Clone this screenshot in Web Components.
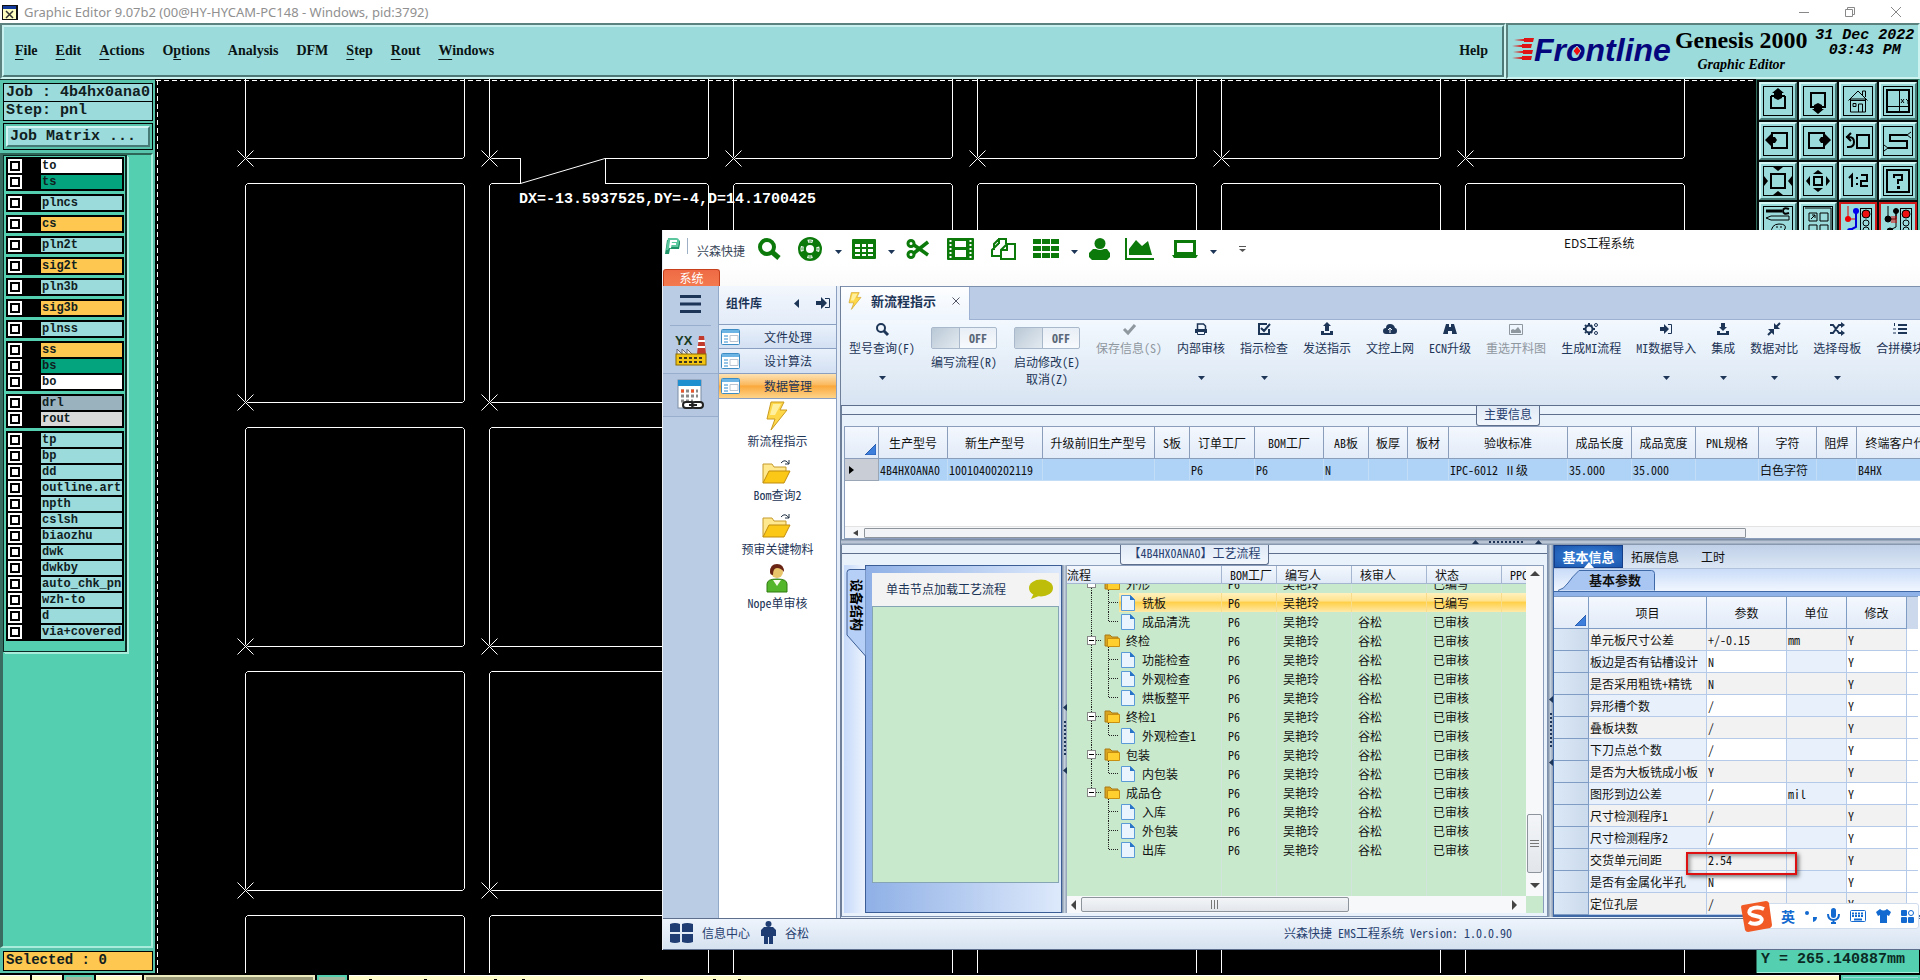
<!DOCTYPE html>
<html lang="zh-CN">
<head>
<meta charset="utf-8">
<title>Graphic Editor</title>
<style>
  html, body {
    margin: 0;
    height: 100%;
    overflow: hidden;
    background: #000;
  }
</style>
</head>
<body>
<genesis-desktop></genesis-desktop>

<script>
const svg = (w, h, body, attrs = '') =>
  `<svg width="${w}" height="${h}" viewBox="0 0 ${w} ${h}" fill="none" aria-hidden="true" ${attrs}>${body}</svg>`;

const baseStyles = `
  * { box-sizing: border-box; }
  svg { display: block; flex: none; }
  button {
    margin: 0; padding: 0; border: 0; background: none;
    font: inherit; color: inherit; text-align: inherit;
  }
  table { border-spacing: 0; table-layout: fixed; }
  td, th { padding: 0; font-weight: inherit; white-space: nowrap; overflow: hidden; }
`;

class BaseElement extends HTMLElement {
  constructor() {
    super();
    this.attachShadow({ mode: 'open' });
  }

  connectedCallback() {
    this.shadowRoot.innerHTML = `<style>${baseStyles}${this.styles()}</style>${this.render()}`;
  }

  styles() { return ':host { display: block; }'; }
  render() { return '<slot></slot>'; }
}

/* ---------- Genesis: title bar ---------- */

customElements.define('genesis-titlebar', class extends BaseElement {
  styles() {
    return `
      :host {
        display: flex; align-items: center; height: 23px; padding: 0 18px 0 2px;
        background: #fff; color: #909090; font: 13px/22px "Noto Sans", sans-serif;
      }
      span { flex: 1; margin-left: 6px; }
      .buttons { display: flex; gap: 34px; }
    `;
  }
  render() {
    return `
      ${svg(16, 16, '<rect x="0" y="1" width="16" height="15" fill="#111"/><rect x="1" y="2" width="13" height="3" fill="#123a9c"/><rect x="1" y="5" width="13" height="10" fill="#ffffc0"/><path d="M4 7l7 7M11 7l-7 7" stroke="#333" stroke-width="1.5"/>')}
      <span>Graphic Editor 9.07b2 (00@HY-HYCAM-PC148 - Windows, pid:3792)</span>
      <div class="buttons">
        <button aria-label="Minimize">${svg(12, 12, '<path d="M1 6.500h10" stroke="#888"/>')}</button>
        <button aria-label="Restore">${svg(12, 12, '<path d="M1.500 3.500h7v7h-7zM3.500 3v-1.500h7v7H9" stroke="#888"/>')}</button>
        <button aria-label="Close">${svg(12, 12, '<path d="M1 1l10 10M11 1L1 11" stroke="#888"/>')}</button>
      </div>
    `;
  }
});

/* ---------- Genesis: menu bar and brand ---------- */

customElements.define('genesis-menubar', class extends BaseElement {
  styles() {
    return `
      :host { display: flex; height: 56px; background: #d2f3f1; }
      nav, .brand {
        border: 2px solid; border-color: #5c8280 #cdf3f1 #cdf3f1 #5c8280;
        background: #9bdbdb; display: flex;
      }
      nav { flex: 1; align-items: center; }
      .inner {
        flex: 1; align-self: stretch; display: flex; align-items: center; gap: 18px; padding: 0 14px 0 11px;
        border: 2px solid; border-color: #c8f1ef #4c7877 #4c7877 #c8f1ef;
        font: bold 14px/18px "Liberation Serif", serif; color: #0a1414;
      }
      u { text-underline-offset: 4px; }
      .help { margin-left: auto; }
      .brand { width: 414px; padding: 0 2px 0 4px; align-items: flex-start; }
      .logo { display: flex; margin-top: 12px; height: 26px; }
      .logo b { font: italic bold 32px/26px "Liberation Sans", sans-serif; color: #05057e; }
      .o { display: inline-block; position: relative; }
      .o svg { position: absolute; left: 6px; top: 9px; }
      .name { margin-left: 4px; text-align: center; color: #000; }
      .name strong { display: block; font: bold 24px/30px "Liberation Serif", serif; }
      .name em { display: block; font: italic bold 14px/20px "Liberation Serif", serif; }
      time { flex: 1; text-align: center; white-space: nowrap; font: italic bold 15px/15px "Liberation Mono", monospace; color: #000; margin: 3px 0 0 6px; }
      time span { display: block; }
    `;
  }
  render() {
    const items = ['<u>F</u>ile', '<u>E</u>dit', '<u>A</u>ctions', 'O<u>p</u>tions', 'Analysis', 'DFM', '<u>S</u>tep', '<u>R</u>out', '<u>W</u>indows'];
    const dart = (x, y) => `<path d="M${x} ${y}l10-1v-1h10l-1 4h-9v-1z" fill="#e01414"/>`;
    return `
      <nav><div class="inner">
        ${items.map(i => `<button>${i}</button>`).join('')}
        <button class="help">Help</button>
      </div></nav>
      <div class="brand">
        <div class="logo">
          ${svg(22, 26, dart(2, 3) + dart(0, 9) + dart(1, 15) + dart(0, 21))}
          <b>Fr<span class="o">o${svg(10, 10, '<path d="M5 0l4 5-4 5-4-5z" fill="#f01010" stroke="#9bdbdb"/>')}</span>ntline</b>
        </div>
        <div class="name"><strong>Genesis 2000</strong><em>Graphic Editor</em></div>
        <time><span>31 Dec 2022</span><span>03:43 PM</span></time>
      </div>
    `;
  }
});

/* ---------- Genesis: layer list ---------- */

const LAYER_GROUPS = [
  [['to', 'white'], ['ts', 'green']],
  [['plncs']], [['cs', 'amber']], [['pln2t']], [['sig2t', 'amber']],
  [['pln3b']], [['sig3b', 'amber']], [['plnss']],
  [['ss', 'amber'], ['bs', 'green'], ['bo', 'white']],
  [['drl', 'slate'], ['rout', 'grey']],
  [['tp'], ['bp'], ['dd'], ['outline.art'], ['npth'], ['cslsh'], ['biaozhu'], ['dwk'],
   ['dwkby'], ['auto_chk_pnl'], ['wzh-to'], ['d'], ['via+covered']]
];

customElements.define('layer-panel', class extends BaseElement {
  styles() {
    return `
      :host {
        display: flex; flex-direction: column; width: 155px; padding: 3px 2px 2px 3px;
        background: #57c4ab; border-top: 1px solid #1c3b36;
        font: bold 15px/17px "Liberation Mono", monospace; color: #10201e;
      }
      .field { height: 19px; border: 1px solid #000; background: #9bdbdb; padding-left: 2px; white-space: nowrap; }
      .field + .field { border-top: 0; }
      .matrix { margin-top: 2px; border: 1px solid #000; padding: 2px; }
      .matrix button {
        width: 100%; height: 21px; padding-left: 2px; background: #9bdbdb;
        border: 2px solid; border-color: #d0f5f3 #467a77 #467a77 #d0f5f3;
      }
      .well {
        flex: 1; margin: 3px 0 3px -3px; background: #54cfb0;
        border: solid; border-width: 2px 2px 2px 3px; border-color: #2d6556 #a8ecdc #a8ecdc #3a6d62;
      }
      .frame {
        width: 124px; padding: 1px 1px 7px 2px; border: 1px solid #0d2a24; border-right-width: 2px;
        box-shadow: 1px 1px #a8ecdc, 2px 2px #a8ecdc;
        font-size: 12px; line-height: 14px;
      }
      .group { background: #000; margin-bottom: 3px; padding: 2px; }
      label { display: flex; height: 14px; }
      label + label { margin-top: 2px; }
      input {
        appearance: none; flex: none; width: 14px; height: 14px; margin: 0 19px 0 0;
        border: 2px solid #fff; background: #fff; box-shadow: inset 0 0 0 2px #000;
      }
      span { flex: 1; background: #9bdbdb; padding-left: 1px; overflow: hidden; }
      .white { background: #fff; }
      .green { background: #04a57e; }
      .amber { background: #fdc750; }
      .slate { background: #9ab2be; }
      .grey { background: #d9d9d9; }
      .selected { height: 20px; border: 1px solid #000; background: #fdc750; padding-left: 2px; font-size: 14px; }
    `;
  }
  render() {
    const row = ([name, tone = '']) => `<label><input type="checkbox"><span class="${tone}">${name}</span></label>`;
    return `
      <div class="field">Job : 4b4hx0ana0</div>
      <div class="field">Step: pnl</div>
      <div class="matrix"><button>Job Matrix ...</button></div>
      <div class="well"><div class="frame">
        ${LAYER_GROUPS.map(g => `<div class="group">${g.map(row).join('')}</div>`).join('')}
      </div></div>
      <div class="selected">Selected : 0</div>
    `;
  }
});

/* ---------- Genesis: board canvas ---------- */

customElements.define('board-canvas', class extends BaseElement {
  styles() {
    return `
      :host { display: block; flex: 1; min-width: 0; background: #000; overflow: hidden; }
      text { font: bold 15px "Liberation Mono", monospace; fill: #fff; }
    `;
  }
  render() {
    const pitch = 244;
    const size = 219;
    let cells = '';
    for (let col = 0; col < 6; col++) {
      for (let row = 0; row < 5; row++) {
        const x = 90.5 + col * pitch;
        const y = -139.5 + row * pitch;
        cells += `<path d="M${x + 2} ${y}h${size - 4}l2 2v${size - 4}l-2 2h${4 - size}l-2-2v${4 - size}z"/>`;
        cells += `<path d="M${x - 8} ${y + size - 8}l16 16m0-16l-16 16"/>`;
      }
    }
    return `
      <svg width="100%" height="100%" fill="none" stroke="#fff">
        <path d="M2.500 1v2000M1 1.500h3000" stroke-dasharray="5 3"/>
        ${cells}
        <path d="M366 79.500h84M366 104.500h84" stroke="#000" stroke-width="3"/>
        <path d="M365.500 79v25.500L450 79.500M450.500 79v26"/>
        <text x="364" y="124" stroke="none">DX=-13.5937525,DY=-4,D=14.1700425</text>
      </svg>
    `;
  }
});

/* ---------- Genesis: right tool palette ---------- */

const PALETTE = {
  'Pan up': '<path d="M8 10H8v12h14V10" stroke-width="2"/><path d="M8 10h14" stroke-width="2"/><path d="M15 2l6 5h-2v5l-4 2-4-2V7H9z" fill="#000" stroke="none"/>',
  'Pan down': '<path d="M8 7h14v14H8z" stroke-width="2"/><path d="M15 28l6-5h-2v-4l-4-2-4 2v4H9z" fill="#000" stroke="none"/>',
  'Home': '<path d="M5.500 14.500L15 5l9.500 9.500M7.500 13v13h15V13zM7.500 14.500h15M15.500 26v-8h4v8M10 17.500h3v3h-3zM19.500 9V5h3v6"/>',
  'Coordinates': '<path d="M4 4h22v22H4z" stroke-width="2"/><path d="M16.500 4v22M4 20.500h22M18 13l3 4m0-4l-3 4m5-4l2 2 2-2m-2 2v3"/>',
  'Pan left': '<path d="M9 7h15v15H9z" stroke-width="2"/><path d="M2 14l6-6v3h4l2 3-2 3H8v3z" fill="#000" stroke="none"/>',
  'Pan right': '<path d="M6 7h15v15H6z" stroke-width="2"/><path d="M28 14l-6-6v3h-4l-2 3 2 3h4v3z" fill="#000" stroke="none"/>',
  'Previous view': '<path d="M14 9h12v13H14z" stroke-width="2"/><path d="M4 21h2q5 0 5-5t-5-5H3m5-4l-4 4 4 4" stroke-width="2"/>',
  'Serpent': '<path d="M24 9H7v6h17v7H5" stroke-width="2"/><path d="M24 9l4-3m-4 3l4 3M5 22l-4-3m4 3l-4 3"/>',
  'Zoom in': '<path d="M8 8h14v14H8z" stroke-width="2"/><path d="M10 1h10l-5 4zM10 29h10l-5-4zM1 10v10l4-5zM29 10v10l-4-5z" fill="#000" stroke="none"/>',
  'Zoom out': '<path d="M11 11h8v8h-8z" stroke-width="2"/><path d="M10 8h10l-5-4zM10 22h10l-5 4zM7 10v10l-4-5zM23 10v10l4-5z" fill="#000" stroke="none"/>',
  'Zoom 1:2': '<path d="M6 12l3-3v12M18 9h6v6h-6v5h7" stroke-width="2"/><path d="M13 11h2v2h-2zM13 17h2v2h-2z" fill="#000" stroke="none"/>',
  'Query': '<path d="M4 4h22v22H4z" stroke-width="2"/><path d="M11 12v-3h8v5h-4v4" stroke-width="2"/><path d="M14 20h3v3h-3z" fill="#000" stroke="none"/>',
  'Setup': '<path d="M3 5h16" stroke-width="3"/><path d="M26 3q-6-2-6 2t6 2" stroke-width="2"/><path d="M3 12l5-2h18v4H8zM8 28q0-10 8-10t6 5q-3 4-6 1" /><path d="M13 21h2m2 0h2"/>',
  'Panels': '<path d="M2 2h26v30H2M6 7h8v8H6zM17 7h8v8h-8zM6 19h8v8H6zM17 19h8v8h-8z"/><path d="M8 13l4-4h-3m3 0v3"/>',
  'Net colour': '<path d="M5 0v13h8" stroke="#d00"/><path d="M13 5v16l-8 4" stroke="#00d" stroke-width="2"/><circle cx="5" cy="13" r="3" fill="#e00" stroke="none"/><circle cx="13" cy="5" r="3" fill="#00e" stroke="none"/><circle cx="7" cy="25" r="3" fill="#00e" stroke="none"/><rect x="17.500" y="2.500" width="11" height="28"/><circle cx="23" cy="8" r="4" fill="#f01010"/><circle cx="23" cy="17" r="3"/><circle cx="23" cy="24" r="3"/>',
  'Net check': '<path d="M5 0v13h8v-8v16l-8 4"/><path d="M9 10v7m2-7v7m2-7v7" stroke="#d00"/><circle cx="5" cy="13" r="3" fill="#000"/><circle cx="13" cy="5" r="2.500" fill="#000"/><circle cx="7" cy="25" r="3" fill="#000"/><rect x="17.500" y="2.500" width="11" height="28"/><circle cx="23" cy="8" r="4" fill="#f01010"/><circle cx="23" cy="17" r="3"/><circle cx="23" cy="24" r="3"/>'
};

customElements.define('tool-palette', class extends BaseElement {
  styles() {
    return `
      :host {
        display: flex; flex-direction: column; justify-content: space-between; width: 164px;
        border-left: 1px solid #2f6b5a; background: #000;
      }
      .grid {
        display: grid; grid-template-columns: repeat(4, 38px); gap: 2px; padding: 2px 1px 2px 2px;
        background: #050d0c; border-right: 2px solid #57c4ab; border-top: 1px solid #2f6b5a;
      }
      button {
        height: 38px; padding: 2px; background: #9bdbdb;
        border: 2px solid; border-color: #d3f7f5 #467a77 #467a77 #d3f7f5;
      }
      button.hot { border-color: #d01818; }
      button svg { stroke: #000; outline: 1px solid #000; outline-offset: -1px; overflow: hidden; }
      button.hot svg { outline: 0; }
      output {
        margin-right: 1px; height: 23px; padding-left: 4px; background: #54cfb0;
        border-bottom: 1px solid #a8ecdc;
        font: bold 15px/20px "Liberation Mono", monospace; color: #0b2a24; white-space: nowrap;
      }
    `;
  }
  render() {
    return `
      <div class="grid">
        ${Object.entries(PALETTE).map(([name, body]) =>
          `<button class="${name.startsWith('Net') ? 'hot' : ''}" aria-label="${name}">${svg(30, 30, body)}</button>`).join('')}
      </div>
      <output>Y = 265.140887mm</output>
    `;
  }
});

/* ---------- Genesis: command line strip ---------- */

customElements.define('command-strip', class extends BaseElement {
  styles() {
    return `
      :host { display: flex; height: 7px; padding-top: 2px; gap: 2px; background: #000; overflow: hidden; }
      i { background: #fffdc9; width: 30px; border-top: 1px solid #fff; }
      i.teal { background: #9fb9a0; border: solid #54cfb0; border-width: 2px 2px 0; }
      i.mid { width: 46px; }
      i.bar { width: 171px; border: 2px solid #ecebc0; border-bottom: 0; background: #9a9a78; }
      i.fill { flex: 1; }
      i.end { width: 79px; background: #9bdbdb; border: 2px solid #54cfb0; }
    `;
  }
  render() {
    const marks = [20, 75, 145, 173, 291, 364, 389];
    return `
      <i></i><i></i><i class="teal"></i><i class="mid"></i><i class="bar"></i><i class="teal"></i>
      <i class="fill">${svg(400, 4, marks.map(x => `<path d="M${x} 3.500h3" stroke="#000"/>`).join(''))}</i>
      <i class="end"></i>
    `;
  }
});

/* ---------- EDS: icons ---------- */

const INK = '#1d3557';
const GREEN = '#0b7a0b';

const caret = (color = INK) => svg(7, 4, `<path d="M0 0h7L3.500 4z" fill="${color}"/>`);
const left = svg(5, 9, `<path d="M5 0v9L0 4.500z" fill="${INK}"/>`);

const GREEN_ICONS = {
  search: svg(24, 22, `<circle cx="10" cy="9" r="7" stroke="${GREEN}" stroke-width="4"/><path d="M15 14l7 6" stroke="${GREEN}" stroke-width="5"/>`),
  ring: svg(26, 24, `<circle cx="13" cy="12" r="8" stroke="${GREEN}" stroke-width="8"/><circle cx="13" cy="12" r="8" stroke="#fff" stroke-width="3" stroke-dasharray="5 7.570" stroke-dashoffset="2.500"/><circle cx="13" cy="12" r="8" stroke="${GREEN}" stroke-width="1" stroke-dasharray="3 9.570" stroke-dashoffset="1.500"/>`),
  table: svg(24, 20, `<rect width="24" height="20" rx="1" fill="${GREEN}"/><path d="M3 5h5v3H3zM10 5h4v3h-4zM16 5h5v3h-5zM3 10h5v3H3zM10 10h4v3h-4zM16 10h5v3h-5zM3 15h5v2H3zM10 15h4v2h-4zM16 15h5v2h-5z" fill="#fff"/>`),
  cut: svg(23, 20, `<circle cx="5" cy="4.500" r="3" stroke="${GREEN}" stroke-width="3"/><circle cx="5" cy="15.500" r="3" stroke="${GREEN}" stroke-width="3"/><path d="M8 6l14 10M8 14L22 3" stroke="${GREEN}" stroke-width="3.500"/>`),
  film: svg(27, 22, `<rect width="27" height="22" rx="1" fill="${GREEN}"/><path d="M8 3h11v6H8zM8 12h11v7H8z" fill="#fff"/><path d="M3.500 2v19M23.500 2v19" stroke="#fff" stroke-width="2" stroke-dasharray="2 2"/>`),
  copy: svg(26, 22, `<path d="M8 6h-1L1 12v6h9M8 6V1h7v5M8 1L3 6v6M14 8l-4 4v9h14V6h-8zM16 6v6h-6" stroke="${GREEN}" stroke-width="2"/>`),
  grid: svg(27, 20, `<path d="M0 0h8v5H0zM9 0h8v5H9zM18 0h8v5h-8zM0 7h8v5H0zM9 7h8v5H9zM18 7h8v5h-8zM0 14h8v5H0zM9 14h8v5H9zM18 14h8v5h-8z" fill="${GREEN}"/>`),
  user: svg(22, 22, `<circle cx="11" cy="5.500" r="5.500" fill="${GREEN}"/><path d="M4 11h3q4 2 8 0h3l3 4v4l-3 3H3l-3-3v-4z" fill="${GREEN}"/>`),
  chart: svg(30, 22, `<path d="M1 0v21h28" stroke="${GREEN}" stroke-width="2"/><path d="M4 17v-6l7-9 6 6 6-5 4 14z" fill="${GREEN}"/>`),
  laptop: svg(26, 18, `<rect x="3.500" y="1.500" width="19" height="12" stroke="${GREEN}" stroke-width="3"/><path d="M0 15h26l-2 3H2z" fill="${GREEN}"/>`)
};

const bolt = (w, h) =>
  `<svg width="${w}" height="${h}" viewBox="0 0 22 30" aria-hidden="true"><path d="M5 1h13l-4 8h7L5 29l4-11H1z" fill="#ffd84a" stroke="#c99a1e"/><path d="M7 3h8L9 14H4z" fill="#fff0a0"/></svg>`;

const folderOpen = svg(30, 26, '<path d="M1 24V5h9l2 3h12v4" fill="#ffe88e" stroke="#c59a2a"/><path d="M1 24l6-12h21l-6 12z" fill="#fbc817" stroke="#c08d10"/><path d="M19 4q4-5 8 1m0-4v4h-4" stroke="#234"/>');

const person = svg(22, 29, '<circle cx="11" cy="8" r="6" fill="#e8c46a"/><path d="M4 8Q4 0 11 0t7 8q-3-4-7-4t-4 7q-3 0-3-3z" fill="#6a2413"/><path d="M1 28v-8q0-5 10-5t10 5v8z" fill="#54b62a" stroke="#2e7a10"/><path d="M7 16l4 6 4-6z" fill="#f4fbe8"/>');

const RIBBON_ICONS = {
  search: '<circle cx="7" cy="7" r="4" stroke-width="2"/><path d="M10 10l4 4" stroke-width="3"/>',
  check: '<path d="M3 8l4 4 7-8" stroke-width="3"/>',
  print: '<path d="M4.500 8V3h6l2 2v3" stroke-width="1.500"/><path d="M2 8h12v4H2z" fill="currentColor" stroke="none"/><path d="M4.500 10.500h7v3h-7z" fill="#f0f6fd"/>',
  tick: '<path d="M13 8v5H3V3h8M5 7l3 3 6-7" stroke-width="2"/>',
  upload: '<path d="M8 1l4 4h-2v5H6V5H4zM2 10h3v2h6v-2h3v4H2z" fill="currentColor" stroke="none"/>',
  cloud: '<path d="M4 13q-3 0-3-3t3-3q0-4 4-4t5 4q2 0 2 3t-3 3z" fill="currentColor" stroke="none"/><path d="M8 12V7m-2 2l2-2 2 2" stroke="#f0f6fd"/>',
  road: '<path d="M4 3h3v3h2V3h3l3 10h-5v-3H6v3H1z" fill="currentColor" stroke="none"/>',
  image: '<path d="M1.500 3.500h13v10h-13z"/><path d="M3 12V9l2-1 2 1 3-3 3 4v2z" fill="currentColor" stroke="none"/>',
  gears: '<circle cx="6" cy="8" r="3.500" stroke-width="2"/><path d="M6 2v2m0 8v2M0 8h2m8 0h2M2 4l1 1m6-1L8 5M2 12l1-1m6 1l-1-1" stroke-width="2"/><circle cx="13" cy="4" r="1.500"/><circle cx="13" cy="12" r="1.500"/>',
  enter: '<path d="M2 6h4V3l5 5-5 5v-3H2z" fill="currentColor" stroke="none"/><path d="M10 3.500h3.500v9H10"/>',
  download: '<path d="M6 2h4v4h2L8 10 4 6h2zM2 10h3v2h6v-2h3v4H2z" fill="currentColor" stroke="none"/>',
  shrink: '<path d="M8 8h6L8 2zM8 8H2l6 6z" fill="currentColor" stroke="none"/><path d="M14 2l-4 4M6 10l-4 4" stroke-width="2"/>',
  shuffle: '<path d="M1 4h3l6 8h4M1 12h3l6-8h4" stroke-width="2"/><path d="M12 1l4 3-4 3zM12 9l4 3-4 3z" fill="currentColor" stroke="none"/>',
  list: '<path d="M6 4h9M6 8h9M6 12h9" stroke-width="2"/><path d="M2.500 2v3M1 8h3M1 12h3"/>'
};

const edsFont = '12px/16px "Noto Sans Mono CJK SC", "Noto Sans CJK SC", sans-serif';

/* ---------- EDS: header ---------- */

customElements.define('eds-header', class extends BaseElement {
  styles() {
    return `
      :host {
        display: flex; flex-direction: column; justify-content: space-between; height: 56px;
        background: linear-gradient(#fff 60%, #fafafa); color: #222;
      }
      .row { display: flex; align-items: center; height: 38px; padding-left: 1px; }
      .brand { margin: 4px 12px 0 8px; padding-left: 1px; color: #3a4759; }
      .sep { width: 1px; height: 16px; margin: 0 0 6px 7px; background: #9db0c6; }
      .logo { margin-bottom: 6px; }
      .quick { display: flex; align-items: center; height: 24px; }
      .title { margin: -12px auto 0 318px; color: #111; font-family: "Noto Sans CJK SC", sans-serif; }
      .menu {
        width: 57px; height: 17px; border: 1px solid #c6401c; border-bottom: 0; border-radius: 3px 3px 0 0;
        background: linear-gradient(#ee6a45, #f47a4e); color: #fff; text-align: center;
      }
    `;
  }
  render() {
    const gaps = { search: 16, ring: 12, table: 12, cut: 18, film: 17, copy: 16, grid: 11, user: 14, chart: 17, laptop: 12 };
    const carets = { ring: 10, table: 11, grid: 11, laptop: 22 };
    const quick = Object.entries(GREEN_ICONS).map(([name, icon]) =>
      `<button style="margin-right:${gaps[name]}px" aria-label="${name}">${icon}</button>` +
      (carets[name] ? `<button style="margin:6px ${carets[name]}px 0 0" aria-label="${name} menu">${caret()}</button>` : '')).join('');
    return `
      <div class="row">
        ${svg(16, 20, '<path d="M3 4h11q3 0 2 4l-1 5H6l-1 5H1z" fill="#1f9468"/><path d="M4 2h8q4 0 3 5l-1 4H6l-2 3H2z" fill="#5cc79f"/><path d="M6 12l1-7h6M7 8h5" stroke="#fff" stroke-width="2"/>', 'class="logo"')}
        <span class="sep"></span>
        <span class="brand">兴森快捷</span>
        <div class="quick">${quick}
          <button aria-label="more">${svg(7, 6, '<path d="M0 .5h7" stroke="#555"/><path d="M0 3h7L3.500 6z" fill="#555"/>')}</button>
        </div>
        <span class="title">EDS工程系统</span>
      </div>
      <button class="menu">系统</button>
    `;
  }
});

/* ---------- EDS: icon rail ---------- */

customElements.define('eds-rail', class extends BaseElement {
  styles() {
    return `
      :host { display: flex; flex-direction: column; width: 56px; background: #bacbe4; border-right: 1px solid #93a9c8; }
      button { display: flex; justify-content: center; align-items: center; height: 43px; background: #b4c6e0; border-bottom: 1px solid #99aecd; }
      button:first-of-type { height: 40px; margin: 0 7px; background: none; padding-bottom: 4px; }
      button:nth-of-type(2) { height: 48px; background: none; border-color: #99aecd; }
      text { font: bold 13px "Liberation Sans", sans-serif; fill: #173a1c; }
    `;
  }
  render() {
    return `
      <button aria-label="menu">${svg(21, 18, `<path d="M0 1.500h21M0 9h21M0 16.500h21" stroke="${INK}" stroke-width="3"/>`)}</button>
      <button aria-label="YX">${svg(32, 32, '<text x="0" y="11">YX</text><path d="M22 20l2-18h5l2 18z" fill="#c23a2c"/><path d="M23 7h7M22 13h8" stroke="#fff" stroke-width="2"/><path d="M2 20v-5l5 5v-5l5 5v-5l5 5" stroke="#667" fill="#eee"/><rect x="1" y="20" width="30" height="11" fill="#f2c414" stroke="#8a6b00"/><path d="M4 24h25M4 28h25" stroke="#3d3520" stroke-width="2" stroke-dasharray="3 2"/>')}</button>
      <button aria-label="calendar">${svg(28, 32, '<rect x="1" y="1" width="23" height="28" fill="#fff" stroke="#7d8ea3"/><rect x="1" y="1" width="23" height="6" fill="#1f8fd0"/><path d="M4 12h17M4 17h17M4 22h12" stroke="#888" stroke-width="3" stroke-dasharray="3 2"/><path d="M4 12h3M14 12h3" stroke="#e8542c" stroke-width="3"/><rect x="6" y="23" width="11" height="6" rx="3" fill="#fff" stroke="#222" stroke-width="2"/><rect x="15" y="23" width="11" height="6" rx="3" fill="#fff" stroke="#222" stroke-width="2"/><path d="M12 26h8" stroke="#222" stroke-width="2"/>')}</button>
    `;
  }
});

/* ---------- EDS: component library ---------- */

customElements.define('component-library', class extends BaseElement {
  styles() {
    return `
      :host { display: flex; width: 122px; border-right: 1px solid #6d7f99; background: #e4ecf8; }
      .body { flex: 1; display: flex; flex-direction: column; margin-right: 3px; background: #fff; border-right: 1px solid #8ba0c0; color: ${INK}; }
      header { display: flex; align-items: center; height: 38px; padding: 0 5px 4px 7px; background: linear-gradient(#f3f7fd, #e3ecf9); font-weight: bold; }
      header span { flex: 1; }
      header svg:last-child { margin-left: 17px; }
      .group {
        display: flex; align-items: center; height: 25px; padding-left: 2px;
        border-bottom: 1px solid #8ba0c0; background: linear-gradient(#e9f1fb, #d3e0f3);
      }
      header + .group { border-top: 1px solid #8ba0c0; }
      .group span { flex: 1; text-align: center; }
      .group.on { background: linear-gradient(#fde2b4, #fbb95e 45%, #fba83b 50%, #fdd489); }
      .items { display: flex; flex-direction: column; align-items: center; padding-top: 2px; gap: 6px; }
      .item { display: flex; flex-direction: column; align-items: center; justify-content: flex-end; gap: 2px; height: 48px; }
    `;
  }
  render() {
    const form = svg(19, 16, '<rect x=".5" y=".5" width="18" height="15" rx="1" fill="#fff" stroke="#3d8cc4"/><rect x="1" y="1" width="17" height="3" fill="#6cb4e4"/><path d="M3 7h4M3 10h4M3 13h4" stroke="#2f8ad0"/><path d="M9 6.500h8v6H9z" stroke="#b9c4d0"/>');
    const groups = ['文件处理', '设计算法', '数据管理'];
    const items = [[bolt(22, 30), '新流程指示'], [folderOpen, 'Bom查询2'], [folderOpen, '预审关键物料'], [person, 'Nope单审核']];
    return `
      <div class="body">
        <header><span>组件库</span>${left}${svg(15, 12, `<path d="M0 4h5V0l6 6-6 6V8H0z" fill="${INK}"/><path d="M9 1.500h4.500v9H9" stroke="${INK}"/>`)}</header>
        ${groups.map((g, i) => `<button class="group ${i === 2 ? 'on' : ''}">${form}<span>${g}</span></button>`).join('')}
        <div class="items">
          ${items.map(([icon, name]) => `<button class="item">${icon}<span>${name}</span></button>`).join('')}
        </div>
      </div>
    `;
  }
});

/* ---------- EDS: document tabs and ribbon ---------- */

customElements.define('doc-tabs', class extends BaseElement {
  styles() {
    return `
      :host { display: flex; height: 34px; background: #bbcce6; border-top: 1px solid #7d90ad; border-bottom: 1px solid #9db2d2; }
      .tab {
        display: flex; align-items: center; width: 129px; height: 33px; padding: 0 9px 5px 7px; color: ${INK};
        background: linear-gradient(#fdfeff, #eef5fd); border-right: 1px solid #9db2d2;
      }
      strong { flex: 1; margin-left: 9px; font-size: 13px; }
    `;
  }
  render() {
    return `<div class="tab">${bolt(14, 18)}<strong>新流程指示</strong>
      <button aria-label="close tab">${svg(8, 8, '<path d="M.5 .5l7 7m0-7l-7 7" stroke="#556"/>')}</button></div>`;
  }
});

const RIBBON = [
  { icon: 'search', text: '型号查询(F)', menu: true },
  { toggle: true, text: '编写流程(R)' },
  { toggle: true, text: '启动修改(E)<br>取消(Z)' },
  { icon: 'check', text: '保存信息(S)', off: true },
  { icon: 'print', text: '内部审核', menu: true },
  { icon: 'tick', text: '指示检查', menu: true },
  { icon: 'upload', text: '发送指示' },
  { icon: 'cloud', text: '文控上网' },
  { icon: 'road', text: 'ECN升级' },
  { icon: 'image', text: '重选开料图', off: true },
  { icon: 'gears', text: '生成MI流程' },
  { icon: 'enter', text: 'MI数据导入', menu: true },
  { icon: 'download', text: '集成', menu: true },
  { icon: 'shrink', text: '数据对比', menu: true },
  { icon: 'shuffle', text: '选择母板', menu: true },
  { icon: 'list', text: '合拼模块' }
];

customElements.define('ribbon-bar', class extends BaseElement {
  styles() {
    return `
      :host {
        display: flex; gap: 15px; height: 86px; padding: 1px 0 0 8px; overflow: hidden; color: ${INK};
        background: linear-gradient(#f2f8fe, #d8e4f2); border-bottom: 1px solid #5d6f8c;
      }
      button, label { flex: none; display: flex; flex-direction: column; align-items: center; white-space: nowrap; text-align: center; }
      button svg { stroke: currentColor; }
      button span { margin-top: 3px; }
      button .drop { margin-top: 20px; stroke: none; }
      button[disabled] { color: #8f979f; }
      label { min-width: 68px; padding-top: 6px; line-height: 17px; }
      .switch {
        display: flex; width: 66px; height: 22px; margin-bottom: 4px; border: 1px solid #a9b8ca; border-radius: 2px;
        background: linear-gradient(#e8eef6, #f7fafd); font-weight: bold; color: #5b6878; line-height: 19px;
      }
      .switch b { flex: 1; }
      input { appearance: none; width: 28px; margin: 0; border: solid #a9b8ca; border-width: 0 1px 0 0; background: linear-gradient(135deg, #b9c8d6, #e3eaf0); }
    `;
  }
  render() {
    return RIBBON.map(({ icon, text, menu, toggle, off }) => toggle
      ? `<label><span class="switch"><input type="checkbox" role="switch"><b>OFF</b></span><span>${text}</span></label>`
      : `<button ${off ? 'disabled' : ''}>${svg(16, 16, RIBBON_ICONS[icon])}<span>${text}</span>
          ${menu ? `<div class="drop">${svg(7, 4, '<path d="M0 0h7L3.500 4z" fill="currentColor" stroke="none"/>')}</div>` : ''}</button>`).join('');
  }
});

/* ---------- EDS: titled group, tab sits on the top rule ---------- */

customElements.define('group-panel', class extends BaseElement {
  styles() {
    return `
      :host { display: flex; flex-direction: column; min-width: 0; overflow: hidden; background: #e9f1fb; border-left: 1px solid #6d7f99; }
      .head { display: flex; height: 20px; padding-left: var(--legend-start, 0); justify-content: var(--legend-align, center); background: linear-gradient(#5d6f8c, #5d6f8c) 0 8px / 100% 1px no-repeat; }
      .legend {
        padding: 0 7px; line-height: 15px; color: #27406f; white-space: nowrap;
        background: linear-gradient(#dfe9f6, #f2f7fd); border: 1px solid #5d6f8c; border-top: 0; border-radius: 0 0 3px 3px;
      }
      ::slotted(*) { flex: 1; min-height: 0; }
    `;
  }
  render() {
    return `<div class="head"><div class="legend">${this.getAttribute('label')}</div></div><slot></slot>`;
  }
});

/* ---------- EDS: main info grid ---------- */

const INFO_COLUMNS = [
  ['生产型号', 69, '4B4HX0ANA0'], ['新生产型号', 95, '10010400202119'], ['升级前旧生产型号', 112, ''],
  ['S板', 35, ''], ['订单工厂', 65, 'P6'], ['BOM工厂', 69, 'P6'], ['AB板', 45, 'N'], ['板厚', 39, ''],
  ['板材', 41, ''], ['验收标准', 119, 'IPC-6012 Ⅱ级'], ['成品长度', 64, '35.000'], ['成品宽度', 64, '35.000'],
  ['PNL规格', 63, ''], ['字符', 58, '白色字符'], ['阻焊', 40, ''], ['终端客户代码', 90, 'B4HX']
];

customElements.define('info-grid', class extends BaseElement {
  styles() {
    return `
      :host { display: flex; flex-direction: column; margin-left: 2px; overflow: hidden; background: #fff; border: solid #8a9dbb; border-width: 1px 0 1px 1px; color: #111; }
      .scroll { flex: 1; overflow: hidden; }
      table { width: 1102px; }
      th { height: 32px; text-align: center; background: linear-gradient(#f4f8fe, #e2ebf8); border: solid #8a9dbb; border-width: 0 1px 1px 0; }
      td { height: 22px; padding-left: 1px; background: #afd3f7; border: solid #c3ddf7; border-width: 0 1px 1px 0; }
      th:first-child { vertical-align: bottom; }
      th:first-child svg { margin: 0 2px 3px auto; }
      td:first-child { padding-left: 4px; background: #c9ced6; border-color: #9aa5b5; }
      .bar { display: flex; align-items: center; height: 12px; padding-left: 8px; background: #f6f7f8; border-top: 1px solid #e3e3e3; }
      .thumb { width: 882px; height: 10px; margin-left: 6px; border: 1px solid #8e949c; border-radius: 1px; background: #f0f2f5; }
    `;
  }
  render() {
    return `
      <div class="scroll"><table>
        <colgroup><col style="width:34px">${INFO_COLUMNS.map(c => `<col style="width:${c[1]}px">`).join('')}</colgroup>
        <thead><tr><th>${svg(11, 11, '<path d="M11 0v11H0z" fill="#3f7fdc" stroke="#2a5cae"/>')}</th>${INFO_COLUMNS.map(c => `<th>${c[0]}</th>`).join('')}</tr></thead>
        <tbody><tr><td>${svg(5, 8, '<path d="M0 0v8l5-4z" fill="#000"/>')}</td>${INFO_COLUMNS.map(c => `<td>${c[2]}</td>`).join('')}</tr></tbody>
      </table></div>
      <div class="bar">${svg(5, 6, '<path d="M5 0v6L0 3z" fill="#444"/>')}<div class="thumb"></div></div>
    `;
  }
});

/* ---------- EDS: splitter bar ---------- */

customElements.define('split-bar', class extends BaseElement {
  styles() {
    return `
      :host { display: flex; flex: none; justify-content: center; align-items: center; gap: 10px; background: linear-gradient(90deg, #7c8da6, #c5d0dd, #8e9db3); }
      :host([row]) { height: 6px; padding-left: 253px; background: linear-gradient(#6f809b, #c5d0dd, #7c8da6); }
      :host([col]) { flex-direction: column; width: 5px; padding-top: 0; }
    `;
  }
  render() {
    if (this.hasAttribute('row')) {
      const up = svg(7, 4, `<path d="M0 4h7L3.500 0z" fill="${INK}"/>`);
      return `${up}${svg(36, 2, `<path d="M0 1h36" stroke="${INK}" stroke-width="2" stroke-dasharray="2 2"/>`)}${up}`;
    }
    const arrow = svg(4, 7, `<path d="M4 0v7L0 3.500z" fill="${INK}"/>`);
    return `${arrow}${svg(2, 36, `<path d="M1 0v36" stroke="${INK}" stroke-width="2" stroke-dasharray="2 2"/>`)}${arrow}`;
  }
});

/* ---------- EDS: device structure side panel ---------- */

customElements.define('device-panel', class extends BaseElement {
  styles() {
    return `
      :host { display: flex; width: 218px; flex: none; background: linear-gradient(90deg, #c6dafa, #eef4fd 22px); }
      .tab { position: relative; width: 21px; height: 96px; }
      .tab svg { position: absolute; }
      .tab b { position: relative; display: block; width: 21px; padding: 14px 0 0 5px; writing-mode: vertical-rl; text-orientation: sideways; line-height: 16px; font-size: 13px; }
      .box { flex: 1; display: flex; flex-direction: column; padding: 7px 2px 29px 6px; border: 1px solid #3c5e96; background: linear-gradient(90deg, #8fb0e6, #dde9fb); }
      .hint { display: flex; align-items: center; justify-content: space-between; height: 33px; padding: 0 6px 2px 14px; background: #f3f3f3; color: ${INK}; }
      .area { flex: 1; background: #c9e9cd; border: 1px solid #86a5b4; }
    `;
  }
  render() {
    return `
      <div class="tab">${svg(22, 96, '<path d="M21.500 4.500H6q-3 0-3 3V70l18.500 21" fill="#b6cff6" stroke="#3c5e96"/>')}<b>设备结构</b></div>
      <div class="box">
        <div class="hint"><span>单击节点加载工艺流程</span>${svg(24, 20, '<ellipse cx="12" cy="9" rx="12" ry="8.500" fill="#bdbd0a"/><path d="M5 14l-3 6 8-3z" fill="#bdbd0a"/>')}</div>
        <div class="area"></div>
      </div>
    `;
  }
});

/* ---------- EDS: process tree ---------- */

const PROCESS = [
  { name: '外形', group: true, state: '已编写', auditor: '', cut: true },
  { name: '铣板', state: '已编写', auditor: '', active: true },
  { name: '成品清洗', last: true },
  { name: '终检', group: true },
  { name: '功能检查' }, { name: '外观检查' }, { name: '烘板整平', last: true },
  { name: '终检1', group: true },
  { name: '外观检查1', last: true },
  { name: '包装', group: true },
  { name: '内包装', last: true },
  { name: '成品仓', group: true, end: true },
  { name: '入库', tail: true }, { name: '外包装', tail: true }, { name: '出库', last: true, tail: true }
];

customElements.define('process-tree', class extends BaseElement {
  styles() {
    return `
      :host { display: flex; flex: 1; min-width: 0; flex-direction: column; background: #c9e9cd; border-top: 1px solid #8a9dbb; border-right: 1px solid #8a9dbb; color: #111; }
      .main { flex: 1; display: flex; min-height: 0; }
      .scroll { flex: 1; min-width: 0; overflow: hidden; }
      table { width: 534px; height: 100%; }
      th { height: 18px; padding-left: 8px; text-align: left; background: linear-gradient(#f4f8fe, #dfe9f6); border: solid #a5b6d0; border-width: 0 1px 1px 0; }
      th:first-child { padding-left: 0; }
      td { height: 19px; padding-left: 6px; line-height: 18px; border-right: 1px solid #d2e2dc; }
      td:first-child { padding-left: 0; }
      td div { display: flex; align-items: center; height: 19px; }
      .cut td { height: 9px; }
      .cut div { height: 9px; overflow: hidden; align-items: flex-end; }
      .active td { background: linear-gradient(#fff1bf, #ffe38e 40%, #ffd04a 50%, #ffe9a8); border-color: #f8dc8c; }
      .active td:first-child { background-position: 52px 0; background-repeat: no-repeat; }
      .rest td { height: auto; }
      .name svg { margin-right: 7px; }
      .name.folder svg { margin-right: 5px; }
      .v { display: flex; flex-direction: column; align-items: center; justify-content: space-between; width: 17px; padding: 3px 0 6px; background: #f7f8f9; }
      .v .thumb { width: 15px; height: 59px; margin: auto 0 7px; }
      .h { display: flex; align-items: center; height: 17px; padding: 0 7px 0 2px; background: #f7f8f9; border-right: 17px solid #c9e9cd; }
      .h .thumb { width: 268px; height: 15px; margin: 0 auto 0 2px; }
      .thumb { display: flex; align-items: center; justify-content: center; border: 1px solid #8e949c; border-radius: 2px; background: linear-gradient(#f3f5f8, #e2e6eb); }
    `;
  }
  guides({ group, last, tail, end, cut }) {
    const dots = 'stroke="#222" stroke-dasharray="1 1"';
    const spine = tail ? '' : end ? `<path d="M24.500 0v6" ${dots}/>` : `<path d="M24.500 ${cut ? 14 : 0}v19" ${dots}/>`;
    if (group) {
      return svg(54, 19, `${spine}<path d="M29 9.500h6M41.500 16v3" ${dots}/>
        <rect x="20.500" y="5.500" width="8" height="8" fill="#fff" stroke="#888"/><path d="M22 9.500h5" stroke="#000"/>
        <path d="M38 15V4h5l2 2h6v9z" fill="#d9a520" stroke="#a87b16"/><path d="M40.500 7.500h12v8h-12z" fill="#ffcf30" stroke="#c98f10"/>`);
    }
    return svg(68, 19, `${spine}<path d="M41.500 0v${last ? 10 : 19}M42 9.500h9" ${dots}/>
      <path d="M54.500 2.500h9l4 4v11h-13z" fill="#eaf4ff" stroke="#5a9ad6"/><path d="M63 2v5h5z" fill="#2a74c8"/>`);
  }
  render() {
    const widths = [155, 55, 75, 75, 75, 99];
    const rows = PROCESS.map(p => `
      <tr class="${p.cut ? 'cut' : ''} ${p.active ? 'active' : ''}">
        <td><div class="name ${p.group ? 'folder' : ''}">${this.guides(p)}<span>${p.name}</span></div></td>
        ${['P6', '吴艳玲', p.auditor ?? '谷松', p.state ?? '已审核', ''].map(t => `<td><div>${t}</div></td>`).join('')}
      </tr>`).join('');
    const tri = d => svg(10, 10, `<path d="${d}" fill="#444"/>`);
    return `
      <div class="main">
        <div class="scroll"><table>
          <colgroup>${widths.map(w => `<col style="width:${w}px">`).join('')}</colgroup>
          <thead><tr>${['流程', 'BOM工厂', '编写人', '核审人', '状态', 'PPC'].map(h => `<th>${h}</th>`).join('')}</tr></thead>
          <tbody>${rows}<tr class="rest">${'<td></td>'.repeat(6)}</tr></tbody>
        </table></div>
        <div class="v">${tri('M0 7h10L5 2z')}<div class="thumb">${svg(9, 8, '<path d="M0 .5h9M0 3.500h9M0 6.500h9" stroke="#777"/>')}</div>${tri('M0 3h10L5 8z')}</div>
      </div>
      <div class="h">${tri('M7 0v10L2 5z')}<div class="thumb">${svg(8, 9, '<path d="M.5 0v9M3.500 0v9M6.500 0v9" stroke="#777"/>')}</div>${tri('M3 0v10l5-5z')}</div>
    `;
  }
});

/* ---------- EDS: parameter panel ---------- */

const PARAMS = [
  ['单元板尺寸公差', '+/-0.15', 'mm'], ['板边是否有钻槽设计', 'N'], ['是否采用粗铣+精铣', 'N'], ['异形槽个数', '/'],
  ['叠板块数', '/'], ['下刀点总个数', '/'], ['是否为大板铣成小板', 'Y'], ['图形到边公差', '/', 'mil'],
  ['尺寸检测程序1', '/'], ['尺寸检测程序2', '/'], ['交货单元间距', '2.54'], ['是否有金属化半孔', 'N'], ['定位孔层', '/']
];

customElements.define('param-panel', class extends BaseElement {
  styles() {
    return `
      :host { display: flex; flex-direction: column; width: 367px; flex: none; border: solid #3f68a6; border-width: 0 0 2px 1px; background: #fff; color: #111; overflow: hidden; }
      .tabs { display: flex; height: 26px; background: linear-gradient(#bfd0e8, #dbe6f4); border-bottom: 1px solid #b0c2dc; }
      .tabs button { padding: 0 8px; }
      .tabs button:nth-child(3) { padding-left: 14px; }
      .tabs .on { position: relative; width: 69px; padding: 0; text-align: center; color: #fff; font-weight: bold; font-size: 13px; background: radial-gradient(#3a86de, #1c56ad); border: 1px solid #143f88; }
      .on svg { position: absolute; left: 29px; bottom: -1px; }
      .sub { height: 22px; background: linear-gradient(#c9dcf9, #f1f6fe); }
      .sub button { position: relative; width: 101px; height: 22px; padding-left: 35px; font-weight: bold; font-size: 13px; line-height: 22px; }
      .sub svg { position: absolute; left: 0; top: 0; }
      .sub span { position: relative; }
      .strip { flex: none; height: 5px; background: #8fb2e8; border-top: 1px solid #3f68a6; }
      table { width: 364px; flex: none; }
      th { height: 33px; text-align: center; background: linear-gradient(#f4f8fe, #e2ebf8); border: solid #7f9cc4; border-width: 1px 1px 1px 0; }
      th:first-child svg { margin: 16px 2px 0 auto; }
      th:last-child, tr :last-child { border-right: 0; }
      th:last-child { background: #ccd9ec; border-bottom: 0; }
      td { height: 22px; padding-left: 1px; border: solid #b5cae8; border-width: 0 1px 1px 0; }
      td:nth-child(2), td:nth-child(4) { background: #e8f1fb; }
      tr:nth-child(odd) td:nth-child(n + 2):nth-child(-n + 5) { background: #f2f2f2; }
      tr td:first-child { background: linear-gradient(90deg, #dbe8f6, #cbdaec); border-color: #7f9cc4; }
    `;
  }
  render() {
    return `
      <div class="tabs"><button class="on">基本信息${svg(10, 6, '<path d="M0 6h10L5 0z" fill="#fff"/>')}</button><button>拓展信息</button><button>工时</button></div>
      <div class="sub"><button>${svg(101, 22, '<path d="M4 21.500Q10 20 14 14t11-12.500h72.500q3 0 3 3v17" fill="#a9c6f2" stroke="#3f68a6"/>')}<span>基本参数</span></button></div>
      <div class="strip"></div>
      <table>
        <colgroup><col style="width:35px"><col style="width:118px"><col style="width:80px"><col style="width:60px"><col style="width:60px"><col></colgroup>
        <thead><tr><th>${svg(11, 11, '<path d="M11 0v11H0z" fill="#3f7fdc" stroke="#2a5cae"/>')}</th><th>项目</th><th>参数</th><th>单位</th><th>修改</th><th></th></tr></thead>
        <tbody>${PARAMS.map(([name, value, unit = '']) =>
          `<tr><td></td><td>${name}</td><td>${value}</td><td>${unit}</td><td>Y</td><td></td></tr>`).join('')}</tbody>
      </table>
    `;
  }
});

/* ---------- EDS: status bar ---------- */

customElements.define('eds-status', class extends BaseElement {
  styles() {
    return `
      :host {
        display: flex; align-items: center; height: 32px; padding: 0 0 3px 7px; color: #27406f;
        background: linear-gradient(#eef4fc, #d6e2f0); border: solid #5d6f8c; border-width: 1px 0;
      }
      .user { margin-left: 11px; }
      button { display: flex; align-items: center; gap: 9px; }
      .version { margin-left: 475px; }
    `;
  }
  render() {
    return `
      <button>${svg(23, 20, '<path d="M0 1q5-2 10 0v8H0zM12 1q5-2 11 0v8H12zM0 11h10v8q-5 2-10 0zM12 11h11v8q-5 2-11 0z" fill="#1f3d73"/>')}<span>信息中心</span></button>
      <button class="user">${svg(15, 23, '<circle cx="7.500" cy="3" r="3" fill="#1f3d73"/><path d="M3 6h9l3 3v6h-3v8H8v-7H7v7H3v-8H0V9z" fill="#1f3d73"/>')}<span>谷松</span></button>
      <span class="version">兴森快捷 EMS工程系统 Version: 1.0.0.90</span>
    `;
  }
});

customElements.define('eds-window', class extends BaseElement {
  styles() {
    return `
      :host { display: flex; flex-direction: column; overflow: hidden; background: #fff; border: solid #eef2f7; border-width: 0 0 0 1px; font: ${edsFont}; }
      .body { flex: 1; display: flex; min-height: 0; }
      main { flex: 1; display: flex; flex-direction: column; min-width: 0; background: #e9f1fb; }
      .info { height: 133px; --legend-start: 634px; --legend-align: flex-start; }
      .work { flex: 1; display: flex; min-height: 0; padding-bottom: 1px; }
      .flow { flex: 1; border-right: 1px solid #7d90ad; border-bottom: 1px solid #7d90ad; }
      .flow > div { display: flex; padding: 0 3px 3px 2px; }
    `;
  }
  render() {
    return `
      <eds-header></eds-header>
      <div class="body">
        <eds-rail></eds-rail>
        <component-library></component-library>
        <main>
          <doc-tabs></doc-tabs>
          <ribbon-bar></ribbon-bar>
          <group-panel class="info" label="主要信息"><info-grid></info-grid></group-panel>
          <split-bar row></split-bar>
          <div class="work">
            <group-panel class="flow" label="【4B4HX0ANA0】工艺流程">
              <div><device-panel></device-panel><split-bar col></split-bar><process-tree></process-tree></div>
            </group-panel>
            <split-bar col></split-bar>
            <param-panel></param-panel>
          </div>
        </main>
      </div>
      <eds-status></eds-status>
    `;
  }
});

/* ---------- Input method bar ---------- */

customElements.define('ime-bar', class extends BaseElement {
  styles() {
    return `
      :host { display: flex; align-items: center; height: 30px; }
      .bar {
        display: flex; align-items: center; gap: 10px; height: 26px; margin-left: -8px; padding: 0 4px 0 16px;
        background: #fff; border: 1px solid #cfdcee; border-radius: 3px; color: #1269cf;
        font: bold 14px/20px "Noto Sans CJK SC", sans-serif;
      }
      .logo { position: relative; z-index: 1; }
    `;
  }
  render() {
    const blue = '#1269cf';
    return `
      ${svg(32, 31, '<path d="M1 6q0-2 2-2L26 0q2 0 3 2l3 22q0 2-2 3L8 31q-2 0-3-2z" fill="#f15a24"/><path d="M24 8q-7-3-13 0-4 4 1 6l8 2q4 3-1 6-6 2-10-1" stroke="#fff" stroke-width="4"/>', 'class="logo"')}
      <div class="bar">
        <span>英</span>
        ${svg(12, 14, `<circle cx="2" cy="4" r="2" fill="${blue}"/><path d="M8 8h4q0 4-4 5z" fill="${blue}"/>`)}
        ${svg(13, 16, `<rect x="4" y="0" width="5" height="10" rx="2.500" fill="${blue}"/><path d="M1 6q0 6 5.500 6T12 6M6.500 12v3M4 15h5" stroke="${blue}" stroke-width="2"/>`)}
        ${svg(16, 12, `<rect x=".5" y=".5" width="15" height="11" rx="1" stroke="${blue}"/><path d="M2 3.500h12M2 6h12" stroke="${blue}" stroke-width="2" stroke-dasharray="2 1"/><path d="M4 9.500h8" stroke="${blue}" stroke-width="2"/>`)}
        ${svg(15, 14, `<path d="M4 0q3.500 3 7 0l4 3-2 4-2-1v8H4V6L2 7 0 3z" fill="${blue}"/>`)}
        ${svg(13, 13, `<rect width="6" height="6" rx="1" fill="${blue}"/><circle cx="10" cy="3" r="2.500" stroke="${blue}"/><rect y="7" width="6" height="6" rx="1" fill="${blue}"/><rect x="7" y="7" width="6" height="6" rx="1" fill="${blue}"/>`)}
      </div>
    `;
  }
});

/* ---------- Desktop ---------- */

customElements.define('genesis-desktop', class extends BaseElement {
  styles() {
    return `
      :host { display: flex; flex-direction: column; height: 100vh; position: relative; overflow: hidden; background: #000; }
      .work { flex: 1; display: flex; min-height: 0; }
      /* floating windows and marks over the editor */
      eds-window { position: absolute; left: 662px; right: 0; top: 230px; bottom: 30px; }
      ime-bar { position: absolute; right: 1px; bottom: 49px; }
      .mark { position: absolute; left: 1686px; top: 852px; width: 111px; height: 23px; border: 2px solid #dd1111; box-shadow: 2px 2px 4px #0008, inset 2px 2px 4px #0006; }
    `;
  }
  render() {
    return `
      <genesis-titlebar></genesis-titlebar>
      <genesis-menubar></genesis-menubar>
      <div class="work">
        <layer-panel></layer-panel>
        <board-canvas></board-canvas>
        <tool-palette></tool-palette>
      </div>
      <command-strip></command-strip>
      <eds-window></eds-window>
      <div class="mark"></div>
      <ime-bar></ime-bar>
    `;
  }
});
</script>
</body>
</html>
